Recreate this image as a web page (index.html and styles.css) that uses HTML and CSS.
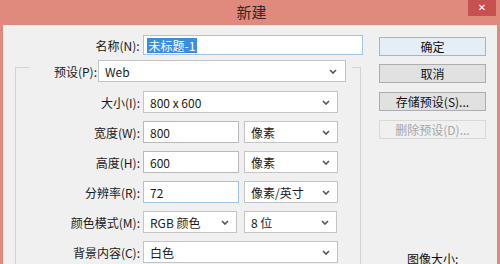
FILE: index.html
```html
<!DOCTYPE html>
<html lang="zh-CN">
<head>
<meta charset="utf-8">
<title>新建</title>
<link rel="stylesheet" href="styles.css">
</head>
<body>
<div class="window">
  <div class="titlebar">
    <span class="title">新建</span>
    <span class="close">&#x2715;</span>
  </div>
  <div class="client">
    <div class="main">
      <div class="name-row">
        <label class="lbl lbl-name">名称(N):</label>
        <div class="field text focus name-field"><span class="selected">未标题-1</span></div>
      </div>
      <fieldset class="group">
        <legend class="preset">
          <label class="lbl lbl-preset">预设(P):</label>
          <div class="field combo preset-combo"><span>Web</span><svg class="chev" width="8" height="5" viewBox="0 0 8 5"><polyline points="1,1 4,4 7,1"/></svg></div>
        </legend>
        <div class="rows">
          <div class="row">
            <label class="lbl">大小(I):</label>
            <div class="field combo full"><span>800 x 600</span><svg class="chev" width="8" height="5" viewBox="0 0 8 5"><polyline points="1,1 4,4 7,1"/></svg></div>
          </div>
          <div class="row">
            <label class="lbl">宽度(W):</label>
            <div class="field text num"><span>800</span></div>
            <div class="field combo unit"><span>像素</span><svg class="chev" width="8" height="5" viewBox="0 0 8 5"><polyline points="1,1 4,4 7,1"/></svg></div>
          </div>
          <div class="row">
            <label class="lbl">高度(H):</label>
            <div class="field text num"><span>600</span></div>
            <div class="field combo unit"><span>像素</span><svg class="chev" width="8" height="5" viewBox="0 0 8 5"><polyline points="1,1 4,4 7,1"/></svg></div>
          </div>
          <div class="row">
            <label class="lbl">分辨率(R):</label>
            <div class="field text num focus"><span>72</span></div>
            <div class="field combo unit"><span>像素/英寸</span><svg class="chev" width="8" height="5" viewBox="0 0 8 5"><polyline points="1,1 4,4 7,1"/></svg></div>
          </div>
          <div class="row">
            <label class="lbl">颜色模式(M):</label>
            <div class="field combo mode"><span>RGB 颜色</span><svg class="chev" width="8" height="5" viewBox="0 0 8 5"><polyline points="1,1 4,4 7,1"/></svg></div>
            <div class="field combo bits"><span>8 位</span><svg class="chev" width="8" height="5" viewBox="0 0 8 5"><polyline points="1,1 4,4 7,1"/></svg></div>
          </div>
          <div class="row">
            <label class="lbl">背景内容(C):</label>
            <div class="field combo full"><span>白色</span><svg class="chev" width="8" height="5" viewBox="0 0 8 5"><polyline points="1,1 4,4 7,1"/></svg></div>
          </div>
        </div>
      </fieldset>
    </div>
    <div class="side">
      <button class="btn default">确定</button>
      <button class="btn b-cancel">取消</button>
      <button class="btn b-save">存储预设(S)...</button>
      <button class="btn b-delete" disabled>删除预设(D)...</button>
      <div class="info">图像大小:</div>
    </div>
  </div>
</div>
</body>
</html>
```

FILE: styles.css
```css
* { box-sizing: border-box; }
html, body {
  margin: 0;
  padding: 0;
  width: 500px;
  height: 264px;
  overflow: hidden;
  background: #df8a7c;
}
body {
  font-family: "Noto Sans CJK SC", "Noto Sans", sans-serif;
  font-size: 12px;
  color: #000;
}
.window {
  width: 500px;
  height: 264px;
  background: #df8a7c;
  padding: 0 3px;
  display: flex;
  flex-direction: column;
}
.titlebar {
  height: 25px;
  flex: none;
  display: flex;
  align-items: flex-start;
  padding-left: 32px;
}
.title {
  flex: 1;
  text-align: center;
  font-size: 15px;
  line-height: 24px;
  color: #2b2b2b;
}
.close {
  width: 28px;
  height: 16px;
  margin-right: 1px;
  background: #c75050;
  color: #fff;
  font-size: 10px;
  line-height: 16px;
  text-align: center;
  font-family: "DejaVu Sans", sans-serif;
  font-weight: bold;
}
.client {
  flex: 1;
  background: #f0f0f0;
  display: flex;
  overflow: hidden;
}
.main {
  width: 360px;
  flex: none;
}
.name-row {
  display: flex;
  margin-top: 10px;
  height: 20px;
}
.lbl {
  display: flex;
  align-items: center;
  justify-content: flex-end;
  white-space: nowrap;
  color: #1a1a1a;
}
.lbl-name { width: 137px; margin-right: 3px; }
.field {
  height: 21px;
  background: #fff;
  border: 1px solid #b9b9b9;
  display: flex;
  align-items: center;
  padding-left: 6px;
  white-space: nowrap;
  color: #1a1a1a;
}
.field.focus { border-color: #9fc6e8; }
.name-field {
  width: 221px;
  height: 20px;
  padding-left: 3px;
}
.selected {
  background: #3a8ee0;
  color: #fff;
  padding: 0 2px;
  line-height: 15px;
}
.combo {
  justify-content: space-between;
  padding-right: 7px;
  border-color: #c4c4c4;
}
.chev {
  fill: none;
  stroke: #555;
  stroke-width: 1.6;
  flex: none;
}
.group {
  margin: -3px 0 0 12px;
  padding: 0 0 20px 0;
  width: 346px;
  border: 1px solid #d3d3d3;
  min-width: 0;
}
.preset {
  margin-left: 14px;
  padding: 8px 6px 0 0;
  display: flex;
}
.lbl-preset { width: 67px; margin-right: 1px; }
.preset-combo { width: 248px; height: 22px; padding-right: 8px; }
.rows {
  margin-top: 9px;
  display: flex;
  flex-direction: column;
  gap: 8px;
}
.row {
  display: flex;
  height: 22px;
  align-items: stretch;
}
.row .lbl { width: 124px; margin-right: 3px; }
.row .field { height: 22px; }
.full { width: 195px; }
.num { width: 96px; margin-right: 5px; }
.unit { width: 94px; }
.mode { width: 94px; margin-right: 7px; }
.bits { width: 93px; }
.side {
  width: 107px;
  margin-left: 16px;
  padding-top: 12px;
  display: flex;
  flex-direction: column;
  position: relative;
}
.btn {
  height: 19px;
  padding: 0;
  font-family: inherit;
  font-size: 12px;
  line-height: 17px;
  background: #e1e1e1;
  border: 1px solid #adadad;
  color: #111;
  text-align: center;
}
.btn.default { border-color: #8dbbe6; background: #e5eef7; }
.b-cancel { margin-top: 8px; }
.b-save { margin-top: 9px; }
.b-delete {
  margin-top: 9px;
  background: #f0f0f0;
  border-color: #d9d9d9;
  color: #a6a6a6;
}
.info {
  margin-top: 112px;
  padding-left: 28px;
  line-height: 16px;
  color: #111;
}
```
